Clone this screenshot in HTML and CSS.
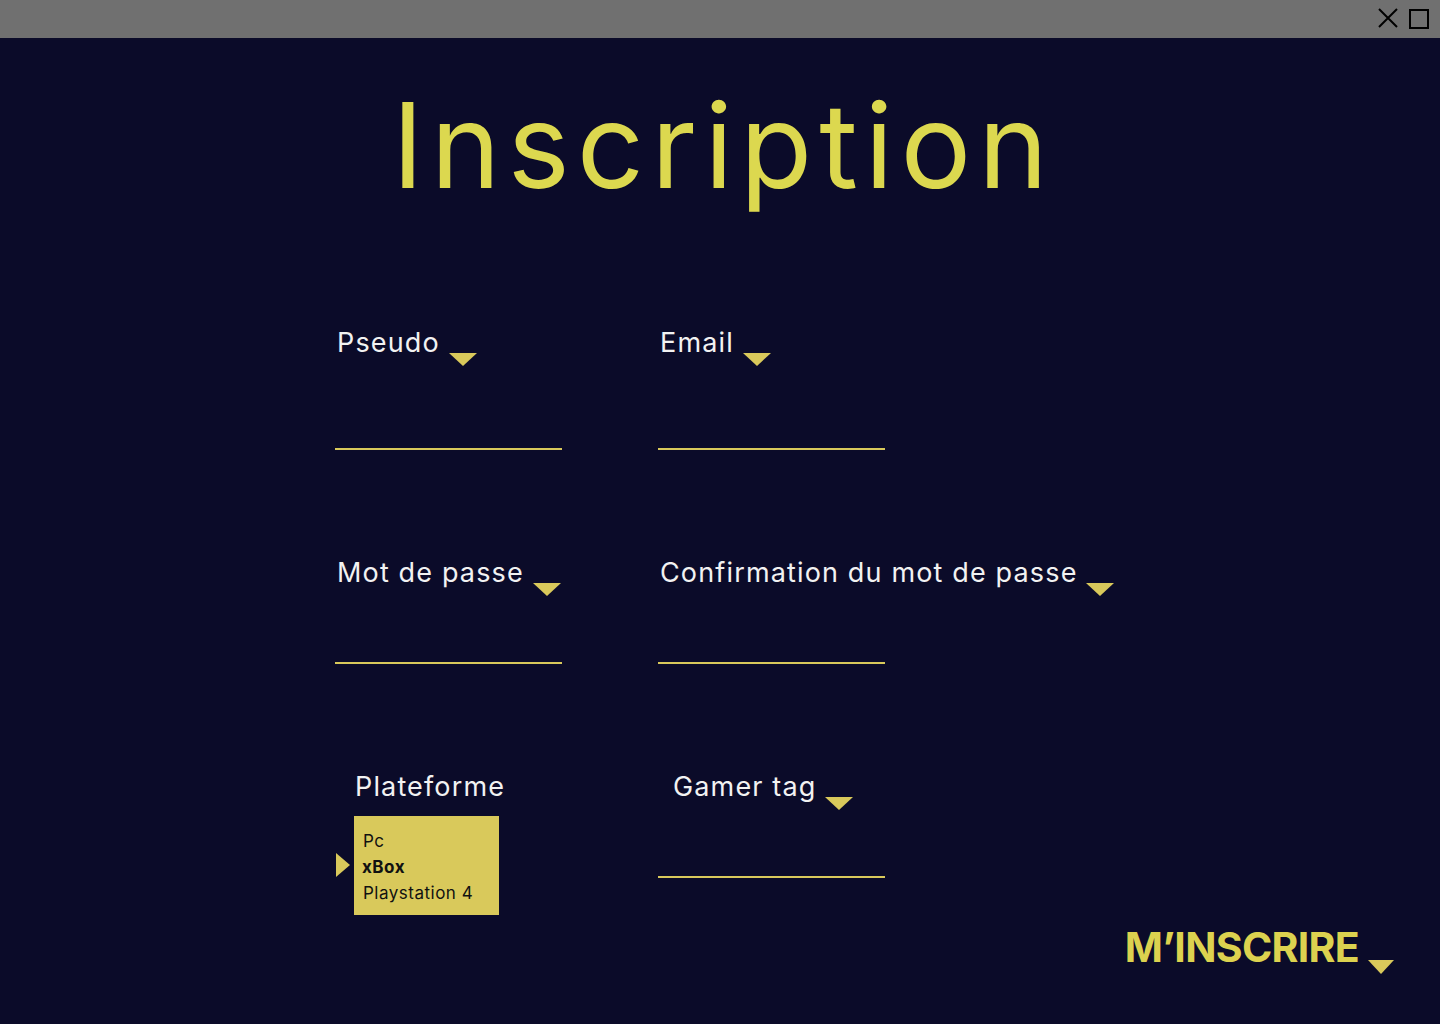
FILE: index.html
```html
<!DOCTYPE html>
<html lang="fr">
<head>
<meta charset="utf-8">
<title>Inscription</title>
<link rel="stylesheet" href="styles.css">
</head>
<body>
<div class="titlebar">
  <svg class="tb-icon" width="20" height="20" viewBox="0 0 20 20"><path d="M1 1 L19 19 M19 1 L1 19" stroke="#000" stroke-width="2" fill="none"/></svg>
  <span class="tb-square"></span>
</div>
<main class="page">
  <h1 class="title">Inscription</h1>
  <form class="form">
    <div class="field row1">
      <div class="label">Pseudo <span class="tri"></span></div>
      <div class="line"></div>
    </div>
    <div class="field row1">
      <div class="label">Email <span class="tri"></span></div>
      <div class="line"></div>
    </div>
    <div class="field">
      <div class="label">Mot de passe <span class="tri"></span></div>
      <div class="line"></div>
    </div>
    <div class="field">
      <div class="label">Confirmation du mot de passe <span class="tri"></span></div>
      <div class="line"></div>
    </div>
    <div class="field platform">
      <div class="label">Plateforme</div>
      <div class="select-row">
        <span class="pointer"></span>
        <ul class="select">
          <li>Pc</li>
          <li class="active">xBox</li>
          <li>Playstation 4</li>
        </ul>
      </div>
    </div>
    <div class="field gamertag">
      <div class="label">Gamer tag <span class="tri"></span></div>
      <div class="line"></div>
    </div>
  </form>
  <div class="submit-row">
    <span class="submit">M’INSCRIRE <span class="tri tri-submit"></span></span>
  </div>
</main>
</body>
</html>
```
FILE: styles.css
```css
* { box-sizing: border-box; }
html, body { margin: 0; padding: 0; }
body {
  background: #0b0b29;
  font-family: Inter, "Noto Sans", sans-serif;
  width: 1440px;
  height: 1024px;
  overflow: hidden;
}
.titlebar {
  height: 38px;
  background: #707070;
  display: flex;
  justify-content: flex-end;
  align-items: flex-start;
  padding: 9px 11px 0 0;
  gap: 11px;
}
.tb-icon { display: block; margin-top: -1px; }
.tb-square {
  display: block;
  width: 20px;
  height: 20px;
  border: 2px solid #000;
}
.page { display: flex; flex-direction: column; }
.title {
  margin: 48px 0 0;
  padding-left: 7px;
  text-align: center;
  font-weight: 400;
  font-size: 118px;
  line-height: 118px;
  letter-spacing: 7px;
  color: #dcd84f;
}
.form {
  margin: 123px 0 0 335px;
  display: grid;
  grid-template-columns: 323px 323px;
  row-gap: 107px;
  align-items: start;
}
.label {
  height: 32px;
  color: #f2f2f2;
  font-size: 27px;
  line-height: 32px;
  letter-spacing: 1.15px;
  padding-left: 2px;
  white-space: nowrap;
}
.tri {
  display: inline-block;
  width: 0;
  height: 0;
  border-left: 14px solid transparent;
  border-right: 14px solid transparent;
  border-top: 13px solid #d9c95b;
  margin-left: 0;
  vertical-align: -14px;
}
.line {
  width: 227px;
  height: 75px;
  border-bottom: 2px solid #d9c95b;
}
.row1 .line { height: 91px; }
.platform .label { padding-left: 20px; }
.gamertag .label { padding-left: 15px; }
.select-row {
  display: flex;
  align-items: flex-start;
  gap: 4px;
  margin: 13px 0 0 1px;
}
.pointer {
  width: 0;
  height: 0;
  margin-top: 37px;
  border-top: 12.5px solid transparent;
  border-bottom: 12.5px solid transparent;
  border-left: 14px solid #d9c95b;
}
.select {
  list-style: none;
  margin: 0;
  width: 145px;
  height: 99px;
  padding: 12px 0 0 9px;
  background: #d9c95b;
  color: #111;
  font-size: 17px;
  line-height: 26px;
  letter-spacing: 0.5px;
}
.select .active { font-weight: 700; margin-left: -1px; }
.submit-row {
  display: flex;
  justify-content: flex-end;
  padding-right: 46px;
  margin-top: 7px;
}
.submit {
  color: #dcd24f;
  font-weight: 700;
  font-size: 41px;
  line-height: 50px;
  letter-spacing: -0.7px;
  white-space: nowrap;
}
.tri-submit {
  border-left-width: 13px;
  border-right-width: 13px;
  border-top-width: 14px;
  margin-left: 0;
  vertical-align: -12px;
}
```
